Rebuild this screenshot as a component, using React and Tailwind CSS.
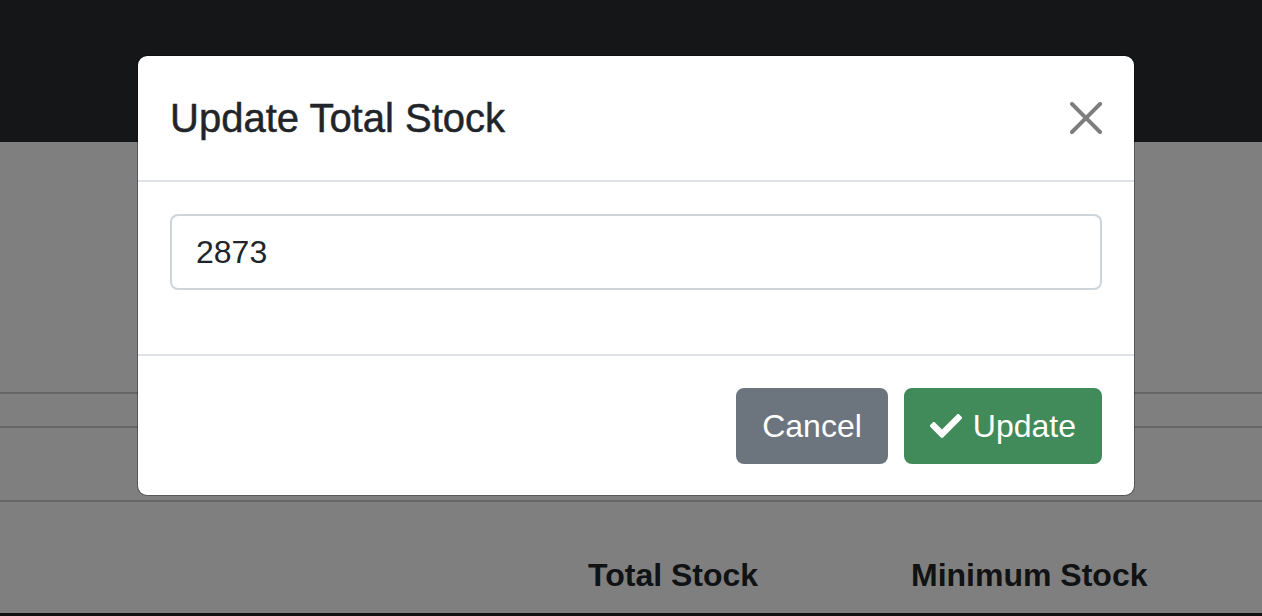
import React from "react";
import { FaCheck } from "react-icons/fa";

export default function App() {
  const font = { fontFamily: '"Liberation Sans", Arial, sans-serif' };
  return (
    <div className="relative h-[616px] w-[1262px] overflow-hidden bg-white" style={font}>
      {/* page underneath */}
      <div className="h-[142px] bg-[#292c2f]" />
      <div className="h-[252px] border-b-2 border-[#cccccc]" />
      <div className="h-[34px] border-b-2 border-[#cccccc]" />
      <div className="h-[74px] border-b-2 border-[#cccccc]" />
      <div className="flex h-[115px] items-end border-b-4 border-[#212529] pb-[14px] pl-[588px] text-[32px] font-bold text-[#212529]">
        <div className="w-[323px]">Total Stock</div>
        <div>Minimum Stock</div>
      </div>

      {/* backdrop + modal */}
      <div className="absolute inset-0 bg-black/50">
        <div className="ml-[137px] mt-[55px] w-[998px] rounded-[10px] border border-black/30 bg-white bg-clip-padding">
          <div className="flex h-[126px] items-center justify-between border-b-2 border-[#dee2e6] px-[32px]">
            <h5 className="text-[40px] leading-[60px] font-medium text-[#212529] [-webkit-text-stroke:0.5px_#212529]">
              Update Total Stock
            </h5>
            <svg width="32" height="32" viewBox="0 0 16 16" className="opacity-50">
              <path
                fill="#000"
                d="M.293.293a1 1 0 011.414 0L8 6.586 14.293.293a1 1 0 111.414 1.414L9.414 8l6.293 6.293a1 1 0 01-1.414 1.414L8 9.414l-6.293 6.293a1 1 0 01-1.414-1.414L6.586 8 .293 1.707a1 1 0 010-1.414z"
              />
            </svg>
          </div>
          <div className="px-[32px] pt-[32px] pb-[32px]">
            <div className="mb-[32px] flex h-[76px] items-center rounded-[8px] border-2 border-[#ced4da] px-[24px] text-[32px] text-[#212529]">
              2873
            </div>
          </div>
          <div className="flex justify-end gap-[16px] border-t-2 border-[#dee2e6] px-[32px] pt-[32px] pb-[31px]">
            <button className="flex h-[76px] items-center rounded-[8px] border-2 border-[#6c757d] bg-[#6c757d] px-[24px] text-[32px] text-white">
              Cancel
            </button>
            <button className="flex h-[76px] items-center rounded-[8px] border-2 border-[#418a5a] bg-[#418a5a] px-[24px] text-[32px] text-white">
              <FaCheck size={32} className="mr-[11px]" />
              Update
            </button>
          </div>
        </div>
      </div>
    </div>
  );
}
